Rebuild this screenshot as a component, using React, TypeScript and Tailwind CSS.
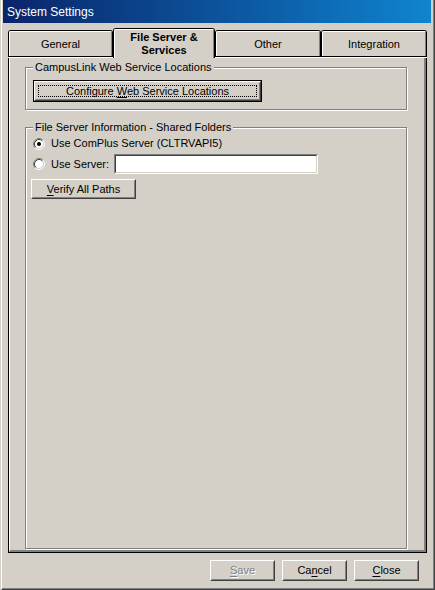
import React from "react";

function Radio({ checked }: { checked?: boolean }) {
  return (
    <svg width="12" height="12" viewBox="0 0 12 12" className="shrink-0">
      <circle cx="6" cy="6" r="4.5" fill="#ffffff" />
      <path d="M2.11 9.89 A5.5 5.5 0 0 1 9.89 2.11" fill="none" stroke="#808080" strokeWidth="1" />
      <path d="M9.89 2.11 A5.5 5.5 0 0 1 2.11 9.89" fill="none" stroke="#ffffff" strokeWidth="1" />
      <path d="M2.82 9.18 A4.5 4.5 0 0 1 9.18 2.82" fill="none" stroke="#404040" strokeWidth="1" />
      <path d="M9.18 2.82 A4.5 4.5 0 0 1 2.82 9.18" fill="none" stroke="#d4d0c8" strokeWidth="1" />
      {checked && <circle cx="6" cy="6" r="2" fill="#000000" />}
    </svg>
  );
}

function Btn({
  children,
  className = "",
  isDefault,
  focus,
  disabled,
}: {
  children: React.ReactNode;
  className?: string;
  isDefault?: boolean;
  focus?: boolean;
  disabled?: boolean;
}) {
  const inner = (
    <div className="h-full border border-t-white border-l-white border-r-[#404040] border-b-[#404040]">
      <div className="h-full border border-t-[#d4d0c8] border-l-[#d4d0c8] border-r-[#808080] border-b-[#808080] flex items-center justify-center p-[2px]">
        <div
          className={`h-full w-full flex items-center justify-center ${
            focus ? "border border-dotted border-black" : "border border-transparent"
          } ${disabled ? "text-[#808080] [text-shadow:1px_1px_0_#ffffff]" : "text-black"}`}
        >
          {children}
        </div>
      </div>
    </div>
  );
  if (isDefault) {
    return <div className={`border border-black ${className}`}>{inner}</div>;
  }
  return <div className={className}>{inner}</div>;
}

function Tab({ label, width, selected }: { label: React.ReactNode; width: string; selected?: boolean }) {
  if (selected) {
    return (
      <div className={`${width} h-[30px] flex flex-col`}>
        <div className="flex-1 border border-b-0 border-black rounded-t-[3px]">
          <div className="h-full border-t border-l border-t-white border-l-white border-r border-r-[#808080] rounded-tl-[2px] flex items-center justify-center font-bold leading-[13px] text-center">
            {label}
          </div>
        </div>
      </div>
    );
  }
  return (
    <div className={`${width} h-[28px] flex flex-col`}>
      <div className="flex-1 border border-b-0 border-black rounded-t-[3px]">
        <div className="h-full border-t border-l border-t-white border-l-white border-r border-r-[#808080] rounded-tl-[2px] flex items-center justify-center">
          {label}
        </div>
      </div>
      <div className="h-[1px] bg-black" />
      <div className="h-[1px] bg-white" />
    </div>
  );
}

function GroupBox({
  title,
  className,
  children,
}: {
  title: string;
  className: string;
  children: React.ReactNode;
}) {
  return (
    <fieldset
      className={`border border-[#808080] shadow-[1px_1px_0_#ffffff,inset_1px_1px_0_#ffffff] ${className}`}
    >
      <legend className="ml-[7px] px-[2px] h-[13px] leading-[13px] bg-[#d4d0c8]">{title}</legend>
      {children}
    </fieldset>
  );
}

export default function App() {
  return (
    <div className="w-[435px] h-[590px] bg-[#d4d0c8] font-['Liberation_Sans',Arial,sans-serif] text-[11px] text-black flex flex-col overflow-hidden">
      <div className="flex-1 flex flex-col border-l border-l-white ml-[1px] border-r border-r-[#404040] border-b border-b-[#404040]">
        <div className="flex-1 flex flex-col border-r border-r-[#808080] border-b border-b-[#808080] pr-[2px] pb-[2px]">
          {/* Title bar */}
          <div className="h-[23px] ml-[1px] flex items-center pl-[4px] bg-gradient-to-r from-[#0a246a] to-[#1084d0]">
            <span className="text-white text-[12px] leading-[14px]">System Settings</span>
          </div>

          {/* Tab control */}
          <div className="ml-[6px] mt-[5px] w-[419px] flex flex-col">
            <div className="h-[30px] flex items-end">
              <Tab label="General" width="w-[105px]" />
              <Tab
                label={
                  <span>
                    File Server &amp;
                    <br />
                    Services
                  </span>
                }
                width="w-[102px]"
                selected
              />
              <Tab label="Other" width="w-[106px]" />
              <Tab label="Integration" width="w-[106px]" />
            </div>
            <div className="h-[495px] border border-t-0 border-black">
              <div className="h-full border-l border-l-white border-r-2 border-r-[#808080] border-b-2 border-b-[#808080] flex flex-col">
                <GroupBox title="CampusLink Web Service Locations" className="ml-[15px] mt-[3px] w-[382px] h-[49px]">
                  <div className="pl-[7px] pt-[6px]">
                    <Btn isDefault focus className="w-[229px] h-[22px]">
                      <span>
                        Configure <span className="underline underline-offset-[2px]">W</span>eb Service Locations
                      </span>
                    </Btn>
                  </div>
                </GroupBox>

                <GroupBox
                  title="File Server Information - Shared Folders"
                  className="ml-[15px] mt-[11px] w-[382px] h-[428px]"
                >
                  <div className="pl-[5px] pt-[3px] flex flex-col">
                    <div className="h-[13px] flex items-center pl-[2px]">
                      <Radio checked />
                      <span className="ml-[6px] leading-[13px]">Use ComPlus Server (CLTRVAPI5)</span>
                    </div>
                    <div className="h-[20px] mt-[4px] flex items-center pl-[2px]">
                      <Radio />
                      <span className="ml-[6px] leading-[13px]">Use Server:</span>
                      <div className="ml-[5px] w-[204px] h-[20px] border border-t-[#808080] border-l-[#808080] border-r-white border-b-white">
                        <div className="h-full border border-t-[#404040] border-l-[#404040] border-r-[#d4d0c8] border-b-[#d4d0c8] bg-white" />
                      </div>
                    </div>
                    <div className="mt-[5px]">
                      <Btn className="w-[105px] h-[20px]">
                        <span>
                          <span className="underline underline-offset-[2px]">V</span>erify All Paths
                        </span>
                      </Btn>
                    </div>
                  </div>
                </GroupBox>
              </div>
            </div>
          </div>

          {/* Bottom buttons */}
          <div className="mt-[7px] flex justify-end gap-[7px] pr-[12px]">
            <Btn disabled className="w-[65px] h-[21px]">
              <span>
                <span className="underline underline-offset-[2px]">S</span>ave
              </span>
            </Btn>
            <Btn className="w-[65px] h-[21px]">
              <span>
                Ca<span className="underline underline-offset-[2px]">n</span>cel
              </span>
            </Btn>
            <Btn className="w-[65px] h-[21px]">
              <span>
                <span className="underline underline-offset-[2px]">C</span>lose
              </span>
            </Btn>
          </div>
        </div>
      </div>
    </div>
  );
}
